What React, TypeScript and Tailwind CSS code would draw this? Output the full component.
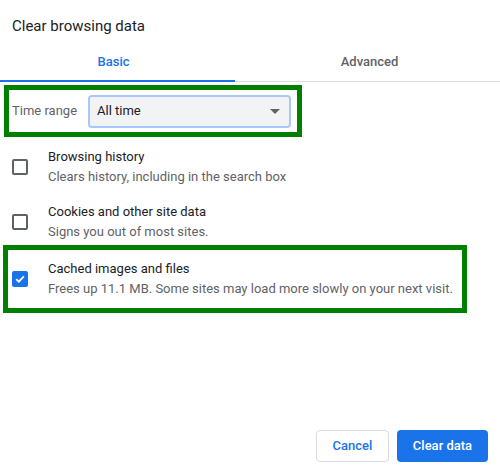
import React from "react";

const FONT = "font-['Roboto','Liberation_Sans',sans-serif]";

function Checkbox({ checked }: { checked?: boolean }) {
    if (checked) {
        return (
            <div className="w-4 h-4 shrink-0 rounded-[2px] bg-[#1a73e8] flex items-center justify-center">
                <svg width="12" height="12" viewBox="0 0 12 12" fill="none">
                    <path d="M2.2 6.2 L4.8 8.7 L9.8 3.4" stroke="white" strokeWidth="1.8" />
                </svg>
            </div>
        );
    }
    return <div className="w-4 h-4 shrink-0 rounded-[2px] border-2 border-[#5f6368]" />;
}

function Item({ title, desc, checked }: { title: string; desc: string; checked?: boolean }) {
    return (
        <div className="flex items-center gap-5">
            <Checkbox checked={checked} />
            <div className="text-[13px] leading-5">
                <div className="text-[#202124]">{title}</div>
                <div className="text-[#5f6368]">{desc}</div>
            </div>
        </div>
    );
}

export default function App() {
    return (
        <div className={`${FONT} w-[500px] h-[475px] bg-white flex flex-col overflow-hidden`}>
            <div className="pl-3 pt-4 text-[15px] leading-5 text-[#202124]">Clear browsing data</div>

            <div className="flex border-b border-[#dadce0]">
                <div className="w-[235px] h-[46px] -mb-px border-b-2 border-[#1a73e8] pt-4 pr-2 text-center text-[13px] leading-5 font-medium text-[#1a73e8]">
                    Basic
                </div>
                <div className="flex-1 h-[45px] pt-4 pl-1 text-center text-[13px] leading-5 font-medium text-[#5f6368]">
                    Advanced
                </div>
            </div>

            <div className="ml-1 mt-[3px] w-[298px] h-[52px] border-[5px] border-[#008000] flex items-center justify-between pl-[3px] pr-[6px]">
                <span className="text-[13px] text-[#5f6368]">Time range</span>
                <div className="w-[203px] h-[33px] rounded-[4px] border-2 border-[#a8c7fa] bg-[#f1f3f4] flex items-center justify-between pl-[7px] pr-[9px]">
                    <span className="text-[13px] text-[#202124]">All time</span>
                    <svg width="10" height="5" viewBox="0 0 10 5">
                        <path d="M0 0 L10 0 L5 5 Z" fill="#5f6368" />
                    </svg>
                </div>
            </div>

            <div className="px-3 mt-[10px]">
                <Item title="Browsing history" desc="Clears history, including in the search box" />
            </div>
            <div className="px-3 mt-[15px]">
                <Item title="Cookies and other site data" desc="Signs you out of most sites." />
            </div>

            <div className="ml-[3px] mt-[3px] w-[464px] h-[68px] border-[5px] border-[#008000] pl-1 pt-[9px]">
                <Item
                    checked
                    title="Cached images and files"
                    desc="Frees up 11.1 MB. Some sites may load more slowly on your next visit."
                />
            </div>

            <div className="mt-auto flex justify-end gap-2 pr-3 pb-[13px]">
                <button className="w-[73px] h-8 rounded-[4px] border border-[#dadce0] bg-white text-[13px] font-medium text-[#1a73e8]">
                    Cancel
                </button>
                <button className="w-[91px] h-8 rounded-[4px] bg-[#1a73e8] text-[13px] font-medium text-white">
                    Clear data
                </button>
            </div>
        </div>
    );
}
